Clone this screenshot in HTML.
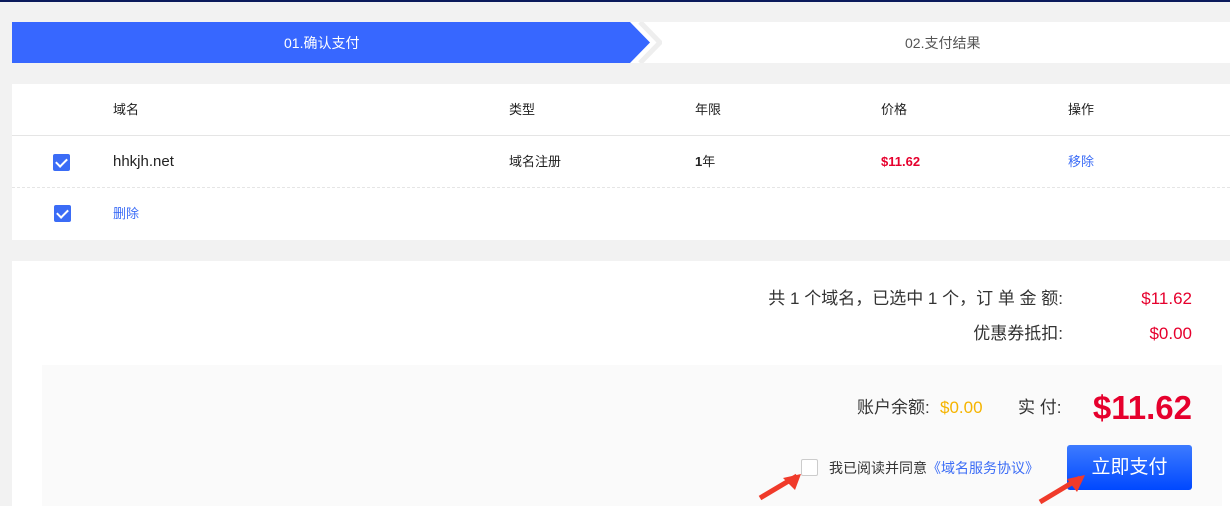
<!DOCTYPE html><html><head><meta charset="utf-8"><style>
*{margin:0;padding:0;box-sizing:border-box}
body{width:1230px;height:506px;overflow:hidden;background:#f2f2f2;font-family:"Liberation Sans","Noto Sans CJK SC",sans-serif;position:relative;color:#222}
.a{position:absolute;line-height:20px;white-space:nowrap}
.cb{position:absolute;width:17px;height:17px;background:#3b6cf6;border-radius:2px}
.cb:after{content:"";position:absolute;left:5px;top:2px;width:5px;height:9px;border:solid #fff;border-width:0 2px 2px 0;transform:rotate(45deg)}
</style></head><body>
<div class="a" style="left:0;top:0;width:1230px;height:2px;background:#0b1a5c"></div>
<div class="a" style="left:12px;top:22px;width:1218px;height:41px;background:#fff"></div>
<svg class="a" style="left:12px;top:22px" width="650" height="41"><polygon points="0,0 618,0 638,20.5 618,41 0,41" fill="#3767ff"/><polyline points="628,0 648,20.5 628,41" fill="none" stroke="#eee" stroke-width="5"/></svg>
<div class="a" style="left:284px;top:33px;font-size:14px;color:#fff">01.确认支付</div>
<div class="a" style="left:905px;top:33px;font-size:14px;color:#555">02.支付结果</div>
<div class="a" style="left:12px;top:84px;width:1218px;height:156px;background:#fff"></div>
<div class="a" style="left:12px;top:135px;width:1218px;height:1px;background:#e5e5e5"></div>
<div class="a" style="left:12px;top:187px;width:1218px;border-top:1px dashed #e5e5e5"></div>
<div class="a" style="top:100px;left:113px;font-size:13px">域名</div>
<div class="a" style="top:100px;left:509px;font-size:13px">类型</div>
<div class="a" style="top:100px;left:695px;font-size:13px">年限</div>
<div class="a" style="top:100px;left:881px;font-size:13px">价格</div>
<div class="a" style="top:100px;left:1068px;font-size:13px">操作</div>
<div class="cb" style="left:53px;top:154px"></div>
<div class="a" style="top:152px;left:113px;font-size:15px">hhkjh.net</div>
<div class="a" style="top:152px;left:509px;font-size:13px">域名注册</div>
<div class="a" style="top:152px;left:695px;font-size:13px"><b>1</b>年</div>
<div class="a" style="top:152px;left:881px;font-size:13px;color:#e6002d;font-weight:bold">$11.62</div>
<div class="a" style="top:152px;left:1068px;font-size:13px;color:#3b6cf6">移除</div>
<div class="cb" style="left:54px;top:205px"></div>
<div class="a" style="top:204px;left:113px;font-size:13px;color:#3b6cf6">删除</div>
<div class="a" style="left:12px;top:261px;width:1218px;height:245px;background:#fff"></div>
<div class="a" style="left:42px;top:365px;width:1180px;height:141px;background:#fafafa"></div>
<div class="a" style="top:289px;right:167px;font-size:17px;color:#333">共 1 个域名，已选中 1 个，订 单 金 额:</div>
<div class="a" style="top:289px;right:38px;font-size:17px;color:#e6002d">$11.62</div>
<div class="a" style="top:324px;right:167px;font-size:17px;color:#333">优惠券抵扣:</div>
<div class="a" style="top:324px;right:38px;font-size:17px;color:#e6002d">$0.00</div>
<div class="a" style="top:398px;left:857px;font-size:17px;color:#333">账户余额:</div>
<div class="a" style="top:398px;left:940px;font-size:17px;color:#f5b400">$0.00</div>
<div class="a" style="top:398px;left:1018px;font-size:17px;color:#333">实 付:</div>
<div class="a" style="top:392px;right:38px;font-size:33px;line-height:32px;color:#e6002d;font-weight:bold">$11.62</div>
<div class="a" style="left:801px;top:459px;width:17px;height:17px;border:1px solid #ccc;border-radius:2px;background:#fff"></div>
<div class="a" style="top:458px;left:829px;font-size:14px;color:#333">我已阅读并同意<span style="color:#3b6cf6">《域名服务协议》</span></div>
<div class="a" style="left:1067px;top:445px;width:125px;height:45px;border-radius:3px;background:linear-gradient(#3d7bff,#0048ff);color:#fff;font-size:19px;text-align:center;line-height:45px">立即支付</div>
<svg class="a" style="left:755px;top:470px" width="340" height="36"><path d="M5,28 L42,6" stroke="#f03a2a" stroke-width="5"/><polygon points="46,4 28,8 40,20" fill="#f03a2a"/><path d="M285,32 L325,8" stroke="#f03a2a" stroke-width="5"/><polygon points="330,5 312,9 322,22" fill="#f03a2a"/></svg>
</body></html>
